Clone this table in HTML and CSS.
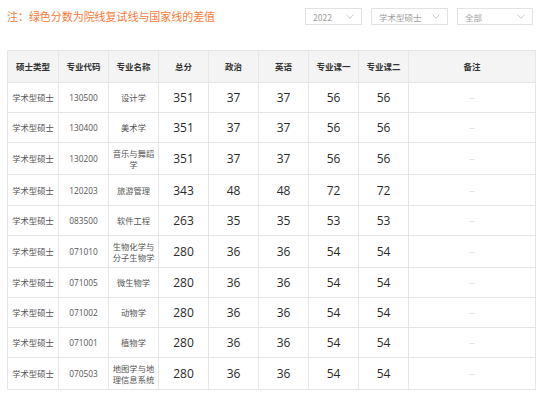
FILE: index.html
```html
<!DOCTYPE html>
<html lang="zh-CN">
<head>
<meta charset="utf-8">
<title>复试线</title>
<link rel="stylesheet" href="styles.css">
</head>
<body>
<div class="page">
  <div class="topbar">
    <div class="note">注：绿色分数为院线复试线与国家线的差值</div>
    <div class="filters">
      <div class="select s1"><span>2022</span><svg class="chev" viewBox="0 0 8 5" width="8" height="5"><path d="M0.5 0.5 L4 4.3 L7.5 0.5" fill="none" stroke="#c4c4c4" stroke-width="0.9"/></svg></div>
      <div class="select s2"><span>学术型硕士</span><svg class="chev" viewBox="0 0 8 5" width="8" height="5"><path d="M0.5 0.5 L4 4.3 L7.5 0.5" fill="none" stroke="#c4c4c4" stroke-width="0.9"/></svg></div>
      <div class="select s3"><span>全部</span><svg class="chev" viewBox="0 0 8 5" width="8" height="5"><path d="M0.5 0.5 L4 4.3 L7.5 0.5" fill="none" stroke="#c4c4c4" stroke-width="0.9"/></svg></div>
    </div>
  </div>
  <table class="grid">
    <colgroup>
      <col class="c1"><col class="c"><col class="c"><col class="c"><col class="c"><col class="c"><col class="c"><col class="c"><col class="clast">
    </colgroup>
    <thead>
      <tr><th>硕士类型</th><th>专业代码</th><th>专业名称</th><th>总分</th><th>政治</th><th>英语</th><th>专业课一</th><th>专业课二</th><th>备注</th></tr>
    </thead>
    <tbody>
      <tr><td>学术型硕士</td><td class="code">130500</td><td>设计学</td><td class="n">351</td><td class="n">37</td><td class="n">37</td><td class="n">56</td><td class="n">56</td><td class="r">--</td></tr>
      <tr><td>学术型硕士</td><td class="code">130400</td><td>美术学</td><td class="n">351</td><td class="n">37</td><td class="n">37</td><td class="n">56</td><td class="n">56</td><td class="r">--</td></tr>
      <tr class="two"><td>学术型硕士</td><td class="code">130200</td><td>音乐与舞蹈学</td><td class="n">351</td><td class="n">37</td><td class="n">37</td><td class="n">56</td><td class="n">56</td><td class="r">--</td></tr>
      <tr class="t31"><td>学术型硕士</td><td class="code">120203</td><td>旅游管理</td><td class="n">343</td><td class="n">48</td><td class="n">48</td><td class="n">72</td><td class="n">72</td><td class="r">--</td></tr>
      <tr><td>学术型硕士</td><td class="code">083500</td><td>软件工程</td><td class="n">263</td><td class="n">35</td><td class="n">35</td><td class="n">53</td><td class="n">53</td><td class="r">--</td></tr>
      <tr class="two"><td>学术型硕士</td><td class="code">071010</td><td>生物化学与分子生物学</td><td class="n">280</td><td class="n">36</td><td class="n">36</td><td class="n">54</td><td class="n">54</td><td class="r">--</td></tr>
      <tr><td>学术型硕士</td><td class="code">071005</td><td>微生物学</td><td class="n">280</td><td class="n">36</td><td class="n">36</td><td class="n">54</td><td class="n">54</td><td class="r">--</td></tr>
      <tr><td>学术型硕士</td><td class="code">071002</td><td>动物学</td><td class="n">280</td><td class="n">36</td><td class="n">36</td><td class="n">54</td><td class="n">54</td><td class="r">--</td></tr>
      <tr><td>学术型硕士</td><td class="code">071001</td><td>植物学</td><td class="n">280</td><td class="n">36</td><td class="n">36</td><td class="n">54</td><td class="n">54</td><td class="r">--</td></tr>
      <tr class="two"><td>学术型硕士</td><td class="code">070503</td><td>地图学与地理信息系统</td><td class="n">280</td><td class="n">36</td><td class="n">36</td><td class="n">54</td><td class="n">54</td><td class="r">--</td></tr>
    </tbody>
  </table>
</div>
</body>
</html>
```

FILE: styles.css
```css
html, body {
  margin: 0;
  padding: 0;
  background: #ffffff;
}

body {
  font-family: "Noto Sans CJK SC", "Noto Sans", sans-serif;
  color: #555555;
  overflow: hidden;
}

.page {
  padding: 8px 4px 0 7px;
}

.topbar {
  display: flex;
  justify-content: space-between;
  align-items: center;
  height: 17px;
}

.note {
  font-size: 11px;
  line-height: 17px;
  color: #f77b3a;
  letter-spacing: -0.05px;
}

.filters {
  display: flex;
  gap: 9px;
  margin-right: 2px;
}

.select {
  box-sizing: border-box;
  height: 17px;
  border: 1px solid #e2e2e2;
  display: flex;
  align-items: center;
  justify-content: space-between;
  padding: 0 7px 0 7px;
  font-size: 8.5px;
  color: #a0a0a0;
  background: #fff;
}

.s1 { width: 57px; }
.s2 { width: 77px; }
.s3 { width: 76px; }

.chev {
  display: block;
}

.grid {
  margin-top: 25px;
  border-collapse: collapse;
  table-layout: fixed;
  width: 528px;
}

.c1 { width: 51px; }
.c { width: 50px; }
.clast { width: 127px; }

.grid th,
.grid td {
  border: 1px solid #e6e6e6;
  text-align: center;
  vertical-align: middle;
  padding: 0 3px;
  font-size: 8.3px;
  line-height: 11px;
  word-break: break-all;
}

.grid th {
  height: 31px;
  background: #f4f4f4;
  color: #333333;
  font-weight: bold;
  font-size: 8.5px;
}

.grid td {
  height: 29px;
  color: #555555;
}

.grid tr.two td {
  height: 31px;
}

.grid tr.t31 td {
  height: 30px;
}

.grid td.code {
  font-family: "Open Sans", "Noto Sans CJK SC", sans-serif;
  font-size: 8.3px;
  color: #555555;
}

.grid td.n {
  font-family: "Open Sans", "Noto Sans CJK SC", sans-serif;
  font-size: 12px;
  color: #2a2a2a;
}

.grid td.r {
  color: #c8c8c8;
  font-size: 8px;
}
```
